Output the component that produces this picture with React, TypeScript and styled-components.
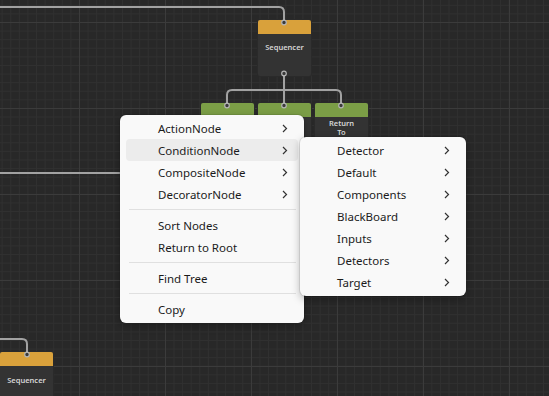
import React from 'react';
import styled, { createGlobalStyle } from 'styled-components';

const GlobalStyle = createGlobalStyle`
  html, body {
    margin: 0;
    padding: 0;
    background: #282828;
  }
`;

const Canvas = styled.div`
  position: relative;
  width: 549px;
  height: 396px;
  overflow: hidden;
  background-color: #282828;
  background-image:
    linear-gradient(#3b3b3b 1px, transparent 1px),
    linear-gradient(90deg, #3b3b3b 1px, transparent 1px),
    linear-gradient(#303030 1px, transparent 1px),
    linear-gradient(90deg, #303030 1px, transparent 1px);
  background-size: 86px 86px, 86px 86px, 8.6px 8.6px, 8.6px 8.6px;
  background-position: 79px 22px;
  font-family: 'Noto Sans', 'Liberation Sans', sans-serif;
`;

const Wires = styled.svg`
  position: absolute;
  left: 0;
  top: 0;
`;

const Node = styled.div<{ $x: number; $y: number; $h: number }>`
  position: absolute;
  left: ${(p) => p.$x}px;
  top: ${(p) => p.$y}px;
  width: 53px;
  height: ${(p) => p.$h}px;
  display: flex;
  flex-direction: column;
  background: #333333;
  border-radius: 2px;
  overflow: hidden;
  box-shadow: 0 0 0 1px #2a2a2a;
`;

const NodeHeader = styled.div<{ $color: string }>`
  height: 14px;
  flex: none;
  background: ${(p) => p.$color};
`;

const NodeBody = styled.div<{ $pad: number }>`
  flex: 1;
  padding-top: ${(p) => p.$pad}px;
  text-align: center;
  color: #d6d6d6;
  font-size: 7.5px;
  font-weight: 600;
  line-height: 9px;
`;

const Menu = styled.div<{ $x: number; $y: number; $w: number }>`
  position: absolute;
  left: ${(p) => p.$x}px;
  top: ${(p) => p.$y}px;
  width: ${(p) => p.$w}px;
  box-sizing: border-box;
  padding: 2px 0 3px;
  background: #f9f9f9;
  border-radius: 6px;
  box-shadow: 0 0 0 1px rgba(0, 0, 0, 0.08), 0 3px 8px rgba(0, 0, 0, 0.28);
  color: #1b1b1b;
  font-size: 11.5px;
`;

const SubMenu = styled(Menu)`
  padding: 2px 0 3px;
`;

const Item = styled.div<{ $active?: boolean; $indent: number }>`
  height: 22px;
  margin: 0 6px;
  padding: 0 10px 0 ${(p) => p.$indent}px;
  display: flex;
  align-items: center;
  justify-content: space-between;
  border-radius: 4px;
  background: ${(p) => (p.$active ? '#ececec' : 'transparent')};
  white-space: nowrap;
`;

const Separator = styled.div`
  height: 1px;
  margin: 4px 8px 4px 9px;
  background: #e0e0e0;
`;

const Chevron = () => (
  <svg width="6" height="9" viewBox="0 0 6 9">
    <polyline points="1,1 4.5,4.5 1,8" fill="none" stroke="#333" strokeWidth="1.2" />
  </svg>
);

const Pin = ({ x, y }: { x: number; y: number }) => (
  <circle cx={x} cy={y} r="2.3" fill="#3a3a3a" stroke="#b5b5b5" strokeWidth="1.2" />
);

const mainItems = ['ActionNode', 'ConditionNode', 'CompositeNode', 'DecoratorNode'];
const subItems = ['Detector', 'Default', 'Components', 'BlackBoard', 'Inputs', 'Detectors', 'Target'];

function App() {
  return (
    <>
      <GlobalStyle />
      <Canvas>
        <Node $x={258} $y={20} $h={56}>
          <NodeHeader $color="#d9a13b" />
          <NodeBody $pad={9}>Sequencer</NodeBody>
        </Node>
        <Node $x={201} $y={103} $h={60}>
          <NodeHeader $color="#7b9e46" />
        </Node>
        <Node $x={258} $y={103} $h={60}>
          <NodeHeader $color="#7b9e46" />
        </Node>
        <Node $x={315} $y={103} $h={60}>
          <NodeHeader $color="#7b9e46" />
          <NodeBody $pad={2}>Return<br />To</NodeBody>
        </Node>
        <Node $x={0} $y={352} $h={56}>
          <NodeHeader $color="#d9a13b" />
          <NodeBody $pad={10}>Sequencer</NodeBody>
        </Node>

        <Wires width="549" height="396">
          <g fill="none" stroke="#a2a2a2" strokeWidth="2">
            <path d="M0 7 H279 Q284 7 284 12 V22" />
            <path d="M284 74 V90 M232 90 H336 M227 106 V95 Q227 90 232 90 M341 106 V95 Q341 90 336 90 M284 90 V106" />
            <path d="M0 173 H130" />
            <path d="M0 339 H22 Q27 339 27 344 V354" />
          </g>
          <Pin x={284} y={22.5} />
          <Pin x={284} y={73.5} />
          <Pin x={227} y={105.5} />
          <Pin x={284} y={105.5} />
          <Pin x={341} y={105.5} />
          <Pin x={27} y={354.5} />
        </Wires>

        <Menu $x={120} $y={115} $w={184}>
          {mainItems.map((name) => (
            <Item key={name} $indent={32} $active={name === 'ConditionNode'}>
              <span>{name}</span>
              <Chevron />
            </Item>
          ))}
          <Separator />
          <Item $indent={32}>Sort Nodes</Item>
          <Item $indent={32}>Return to Root</Item>
          <Separator />
          <Item $indent={32}>Find Tree</Item>
          <Separator />
          <Item $indent={32}>Copy</Item>
        </Menu>

        <SubMenu $x={300} $y={137} $w={166}>
          {subItems.map((name) => (
            <Item key={name} $indent={31}>
              <span>{name}</span>
              <Chevron />
            </Item>
          ))}
        </SubMenu>
      </Canvas>
    </>
  );
}

export default App;
